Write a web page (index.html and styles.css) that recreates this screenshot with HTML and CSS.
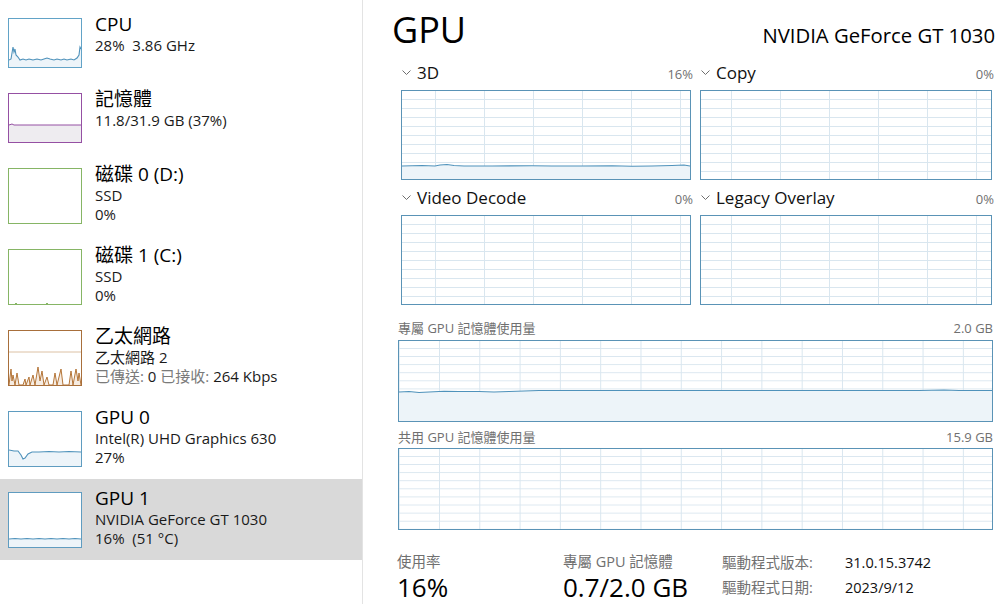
FILE: index.html
```html
<!DOCTYPE html>
<html lang="zh-Hant">
<head>
<meta charset="utf-8">
<title>工作管理員 - GPU</title>
<link rel="stylesheet" href="styles.css">
</head>
<body>
<aside class="sidebar">
  <div class="item">
    <div class="thumb cpu">
      <svg viewBox="0 0 72 48" preserveAspectRatio="none">
        <path class="fill-blue" d="M0,41 L2,40 L4,28 L5,33 L6,30 L7,36 L9,38 L11,41 L14,40 L17,41 L20,40 L24,41 L28,40 L32,41 L35,40 L38,39 L41,40 L45,41 L48,40 L52,41 L55,40 L58,41 L62,40 L65,41 L68,39 L70,36 L71,28 L72,30 L72,48 L0,48 Z"/>
        <path class="line-blue" d="M0,41 L2,40 L4,28 L5,33 L6,30 L7,36 L9,38 L11,41 L14,40 L17,41 L20,40 L24,41 L28,40 L32,41 L35,40 L38,39 L41,40 L45,41 L48,40 L52,41 L55,40 L58,41 L62,40 L65,41 L68,39 L70,36 L71,28 L72,30"/>
      </svg>
    </div>
    <div class="info">
      <div class="name">CPU</div>
      <div class="sub">28%&nbsp; 3.86 GHz</div>
    </div>
  </div>
  <div class="item">
    <div class="thumb mem">
      <svg viewBox="0 0 72 48" preserveAspectRatio="none">
        <path class="fill-mem" d="M0,31 L3,30 L5,31 L72,31 L72,48 L0,48 Z"/>
        <path class="line-mem" d="M0,31 L3,30 L5,31 L72,31"/>
      </svg>
    </div>
    <div class="info">
      <div class="name">記憶體</div>
      <div class="sub">11.8/31.9 GB (37%)</div>
    </div>
  </div>
  <div class="item">
    <div class="thumb tall disk"></div>
    <div class="info">
      <div class="name">磁碟 0 (D:)</div>
      <div class="sub">SSD</div>
      <div class="sub">0%</div>
    </div>
  </div>
  <div class="item">
    <div class="thumb tall disk">
      <svg viewBox="0 0 72 54" preserveAspectRatio="none">
        <path class="line-disk" d="M6,54 L7,53 L8,54 M37,54 L38,53 L39,54"/>
      </svg>
    </div>
    <div class="info">
      <div class="name">磁碟 1 (C:)</div>
      <div class="sub">SSD</div>
      <div class="sub">0%</div>
    </div>
  </div>
  <div class="item">
    <div class="thumb tall eth">
      <svg viewBox="0 0 72 54" preserveAspectRatio="none">
        <path class="mid-eth" d="M0,21 L72,21"/>
        <path class="line-eth" d="M0,54 L2,38 L3,50 L4,44 L6,54 L8,42 L10,54 L14,54 L16,48 L17,54 L20,46 L21,54 L24,44 L26,54 L29,36 L31,50 L33,40 L35,54 L38,46 L40,54 L44,54 L46,42 L48,54 L52,38 L54,54 L60,54 L62,40 L64,54 L67,38 L69,50 L70,42 L72,54"/>
      </svg>
    </div>
    <div class="info">
      <div class="name">乙太網路</div>
      <div class="sub">乙太網路 2</div>
      <div class="sub"><span class="muted">已傳送:</span> 0 <span class="muted">已接收:</span> 264 Kbps</div>
    </div>
  </div>
  <div class="item">
    <div class="thumb tall gpu">
      <svg viewBox="0 0 72 54" preserveAspectRatio="none">
        <path class="fill-blue" d="M0,38 L5,39 L9,39 L12,43 L14,47 L16,46 L19,42 L23,40 L30,40 L40,39.5 L50,40 L60,39.5 L72,40 L72,54 L0,54 Z"/>
        <path class="line-blue" d="M0,38 L5,39 L9,39 L12,43 L14,47 L16,46 L19,42 L23,40 L30,40 L40,39.5 L50,40 L60,39.5 L72,40"/>
      </svg>
    </div>
    <div class="info">
      <div class="name">GPU 0</div>
      <div class="sub">Intel(R) UHD Graphics 630</div>
      <div class="sub">27%</div>
    </div>
  </div>
  <div class="item selected">
    <div class="thumb tall gpu">
      <svg viewBox="0 0 72 54" preserveAspectRatio="none">
        <path class="fill-blue" d="M0,46 L6,45.5 L12,46 L18,45.5 L24,46 L30,45.5 L36,46 L42,45.5 L48,46 L54,45.5 L60,46 L66,45.5 L72,46 L72,54 L0,54 Z"/>
        <path class="line-blue" d="M0,46 L6,45.5 L12,46 L18,45.5 L24,46 L30,45.5 L36,46 L42,45.5 L48,46 L54,45.5 L60,46 L66,45.5 L72,46"/>
      </svg>
    </div>
    <div class="info">
      <div class="name">GPU 1</div>
      <div class="sub">NVIDIA GeForce GT 1030</div>
      <div class="sub">16%&nbsp; (51 °C)</div>
    </div>
  </div>
</aside>

<main class="main">
  <header class="header">
    <div class="title">GPU</div>
    <div class="model">NVIDIA GeForce GT 1030</div>
  </header>

  <section class="engines">
    <div class="engine">
      <div class="eng-head">
        <span class="eng-name"><svg class="chev" viewBox="0 0 9 6"><polyline points="0.5,0.5 4.5,4.5 8.5,0.5"/></svg>3D</span>
        <span class="eng-pct">16%</span>
      </div>
      <div class="eng-box grid-a">
        <svg viewBox="0 0 288 88" preserveAspectRatio="none">
          <path class="fill-blue" d="M0,75 L20,74.5 L33,75 L38,74 L45,73.5 L52,74.5 L62,75 L90,75 L130,74.8 L150,75 L180,75 L210,74.8 L230,75.3 L250,75 L270,74.5 L282,74 L288,75 L288,88 L0,88 Z"/>
          <path class="line-blue" d="M0,75 L20,74.5 L33,75 L38,74 L45,73.5 L52,74.5 L62,75 L90,75 L130,74.8 L150,75 L180,75 L210,74.8 L230,75.3 L250,75 L270,74.5 L282,74 L288,75"/>
        </svg>
      </div>
    </div>
    <div class="engine">
      <div class="eng-head">
        <span class="eng-name"><svg class="chev" viewBox="0 0 9 6"><polyline points="0.5,0.5 4.5,4.5 8.5,0.5"/></svg>Copy</span>
        <span class="eng-pct">0%</span>
      </div>
      <div class="eng-box grid-b"></div>
    </div>
    <div class="engine">
      <div class="eng-head">
        <span class="eng-name"><svg class="chev" viewBox="0 0 9 6"><polyline points="0.5,0.5 4.5,4.5 8.5,0.5"/></svg>Video Decode</span>
        <span class="eng-pct">0%</span>
      </div>
      <div class="eng-box grid-a"></div>
    </div>
    <div class="engine">
      <div class="eng-head">
        <span class="eng-name"><svg class="chev" viewBox="0 0 9 6"><polyline points="0.5,0.5 4.5,4.5 8.5,0.5"/></svg>Legacy Overlay</span>
        <span class="eng-pct">0%</span>
      </div>
      <div class="eng-box grid-b"></div>
    </div>
  </section>

  <section class="memory">
    <div class="mem-head first">
      <span>專屬 GPU 記憶體使用量</span>
      <span>2.0 GB</span>
    </div>
    <div class="mem-box">
      <svg viewBox="0 0 593 80" preserveAspectRatio="none">
        <path class="fill-blue" d="M0,51 L10,50.5 L20,51.5 L30,51 L45,50.3 L60,50.5 L80,50.5 L95,51 L110,50.5 L125,50 L140,49.5 L200,49.5 L300,49.5 L400,49.5 L520,49.5 L545,49 L560,49.5 L593,49.5 L593,80 L0,80 Z"/>
        <path class="line-blue" d="M0,51 L10,50.5 L20,51.5 L30,51 L45,50.3 L60,50.5 L80,50.5 L95,51 L110,50.5 L125,50 L140,49.5 L200,49.5 L300,49.5 L400,49.5 L520,49.5 L545,49 L560,49.5 L593,49.5"/>
      </svg>
    </div>
    <div class="mem-head second">
      <span>共用 GPU 記憶體使用量</span>
      <span>15.9 GB</span>
    </div>
    <div class="mem-box"></div>
  </section>

  <section class="stats">
    <div class="stat col1">
      <div class="stat-label">使用率</div>
      <div class="stat-value">16%</div>
    </div>
    <div class="stat col2">
      <div class="stat-label">專屬 GPU 記憶體</div>
      <div class="stat-value">0.7/2.0 GB</div>
    </div>
    <div class="driver">
      <span class="d-label">驅動程式版本:</span><span class="d-value">31.0.15.3742</span>
      <span class="d-label">驅動程式日期:</span><span class="d-value">2023/9/12</span>
    </div>
  </section>
</main>
</body>
</html>
```

FILE: styles.css
```css
* { box-sizing: border-box; }

html, body {
  margin: 0;
  padding: 0;
}

body {
  width: 1000px;
  height: 604px;
  overflow: hidden;
  background: #ffffff;
  color: #111111;
  font-family: "Open Sans", "Noto Sans CJK TC", sans-serif;
  display: flex;
}

/* ---------- sidebar ---------- */
.sidebar {
  width: 363px;
  flex: none;
  height: 604px;
  border-right: 1px solid #e3e3e3;
  padding-top: 5px;
}

.item {
  display: flex;
  align-items: flex-start;
  padding: 7px 0 12px 8px;
}

.item.selected {
  background: #d9d9d9;
}

.thumb {
  width: 74px;
  height: 50px;
  margin-top: 6px;
  flex: none;
  border: 1px solid #5fa0c4;
  background: #ffffff;
}

.thumb.tall { height: 56px; }

.thumb svg {
  display: block;
  width: 100%;
  height: 100%;
}

.thumb.cpu { border-color: #62a3c7; }
.thumb.mem { border-color: #9550a3; }
.thumb.disk { border-color: #86b565; }
.thumb.eth { border-color: #a86f3b; }
.thumb.gpu { border-color: #5f9cc0; }

.info {
  margin-left: 13px;
  white-space: nowrap;
}

.name {
  font-size: 19px;
  line-height: 24px;
  color: #000000;
}

.sub {
  font-size: 15px;
  line-height: 19px;
  color: #1a1a1a;
}

.muted { color: #7a7a7a; }

/* svg strokes/fills */
.fill-blue { fill: #edf4f9; stroke: none; }
.line-blue { fill: none; stroke: #4f92bb; stroke-width: 1.1; vector-effect: non-scaling-stroke; }
.fill-mem { fill: #eeecf0; stroke: none; }
.line-mem { fill: none; stroke: #9550a3; stroke-width: 1; vector-effect: non-scaling-stroke; }
.line-disk { fill: none; stroke: #86b565; stroke-width: 1; vector-effect: non-scaling-stroke; }
.mid-eth { fill: none; stroke: #dcc1a4; stroke-width: 1; vector-effect: non-scaling-stroke; }
.line-eth { fill: #f6ece2; stroke: #b47538; stroke-width: 1; vector-effect: non-scaling-stroke; }

/* ---------- main ---------- */
.main {
  flex: 1;
  padding: 10px 7px 0 34px;
}

.header {
  display: flex;
  justify-content: space-between;
  align-items: baseline;
  height: 45px;
}

.title {
  font-size: 36px;
  line-height: 40px;
  color: #000000;
  margin-left: -5px;
}

.model {
  font-size: 20.3px;
  line-height: 26px;
  color: #000000;
  margin-right: -2px;
}

.engines {
  display: grid;
  grid-template-columns: 290px 292px;
  column-gap: 9px;
  padding-left: 4px;
}

.eng-head {
  height: 35px;
  padding-top: 8px;
  display: flex;
  justify-content: space-between;
  align-items: baseline;
}

.eng-name {
  font-size: 17px;
  line-height: 20px;
  color: #111111;
}

.chev {
  width: 9px;
  height: 6px;
  margin: 0 6px 0 1px;
  vertical-align: 3px;
  fill: none;
  stroke: #6e6e6e;
  stroke-width: 1;
}

.eng-pct {
  font-size: 13px;
  line-height: 20px;
  color: #707070;
  margin-right: -2px;
}

.eng-box {
  height: 90px;
  border: 1px solid #5a93b6;
  background-color: #ffffff;
  background-image:
    linear-gradient(to right, #d9e6ef 1px, transparent 1px),
    linear-gradient(to bottom, #d9e6ef 1px, transparent 1px);
  background-size: 49px 100%, 100% 9px;
  background-repeat: repeat-x, repeat-y;
}

.eng-box.grid-a { background-position: 33px 0, 0 8px; }
.eng-box.grid-b { background-position: 30px 0, 0 8px; }

.eng-box svg,
.mem-box svg {
  display: block;
  width: 100%;
  height: 100%;
}

.memory {
  padding-left: 1px;
}

.mem-head {
  display: flex;
  justify-content: space-between;
  font-size: 13px;
  line-height: 18px;
  color: #707070;
}

.mem-head.first { height: 35px; padding-top: 14px; }
.mem-head.second { height: 26px; padding-top: 6px; }

.mem-box {
  height: 82px;
  border: 1px solid #5a93b6;
  background-color: #ffffff;
  background-image:
    linear-gradient(to right, #d9e6ef 1px, transparent 1px),
    linear-gradient(to bottom, #d9e6ef 1px, transparent 1px);
  background-size: 40.3px 100%, 100% 8.1px;
  background-position: 40px 0, 0 7px;
  background-repeat: repeat-x, repeat-y;
}

/* ---------- stats ---------- */
.stats {
  display: flex;
  margin-top: 22px;
}

.stat.col1 { width: 166px; }
.stat.col2 { width: 159px; }

.stat-label {
  font-size: 14.5px;
  line-height: 20px;
  color: #707070;
}

.stat-value {
  font-size: 26px;
  line-height: 30px;
  color: #000000;
}

.driver {
  display: grid;
  grid-template-columns: 123px auto;
  font-size: 14.5px;
  line-height: 22px;
}

.d-label { color: #707070; }
.d-value { color: #111111; }
```
